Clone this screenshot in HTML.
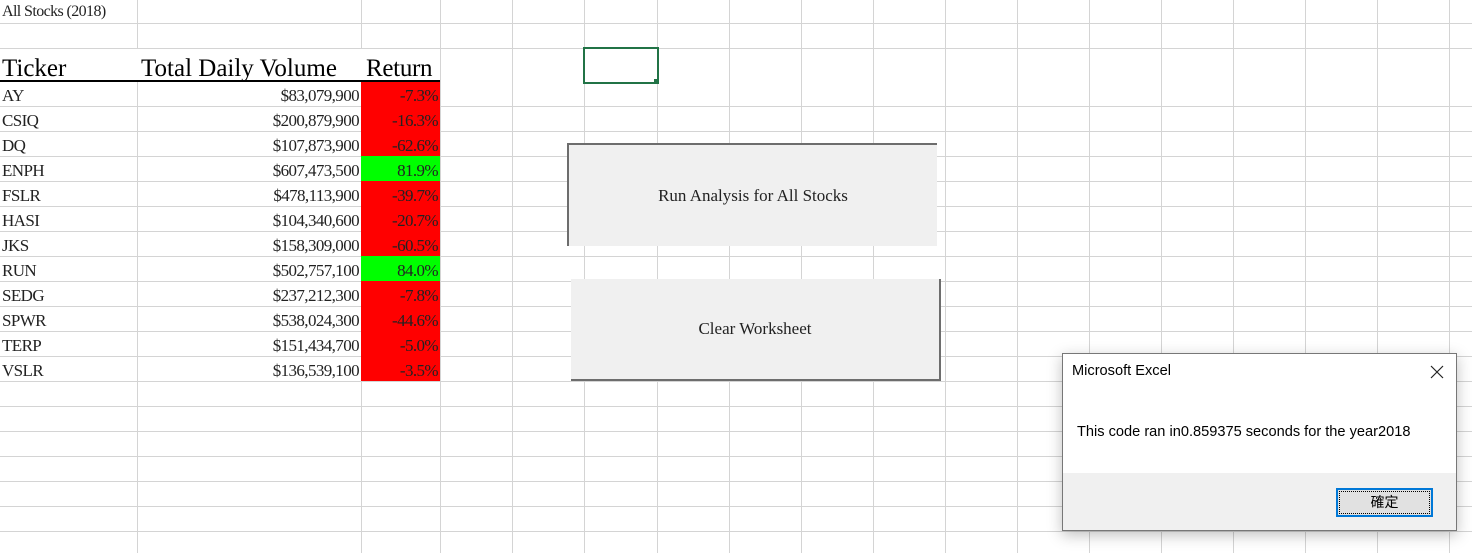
<!DOCTYPE html>
<html><head><meta charset="utf-8"><style>
body{margin:0;width:1472px;height:553px;overflow:hidden;background:#fff;position:relative;font-family:"Liberation Serif",serif;}
.v{position:absolute;top:0;width:1px;height:553px;background:#d4d4d4}
.h{position:absolute;left:0;height:1px;width:1472px;background:#d4d4d4}
.t{position:absolute;font-size:17px;color:#222;line-height:25px;white-space:nowrap;letter-spacing:-0.6px}
.r{position:absolute;text-align:right;font-size:17px;line-height:25px;color:#222;letter-spacing:-0.6px}
.c{position:absolute;left:361px;width:79px;height:25px;background:#f00}
.g{background:#0f0}
</style></head><body>
<div class="h" style="top:23px"></div><div class="h" style="top:48px"></div>
<div class="v" style="left:137px"></div><div class="v" style="left:361px"></div><div class="v" style="left:440px"></div>
<div class="v" style="left:512px"></div><div class="v" style="left:584px"></div><div class="v" style="left:657px"></div>
<div class="v" style="left:729px"></div><div class="v" style="left:801px"></div><div class="v" style="left:873px"></div>
<div class="v" style="left:945px"></div><div class="v" style="left:1017px"></div><div class="v" style="left:1089px"></div>
<div class="v" style="left:1161px"></div><div class="v" style="left:1233px"></div><div class="v" style="left:1305px"></div>
<div class="v" style="left:1377px"></div><div class="v" style="left:1449px"></div>
<div class="h" style="top:106px"></div><div class="h" style="top:131px"></div><div class="h" style="top:156px"></div>
<div class="h" style="top:181px"></div><div class="h" style="top:206px"></div><div class="h" style="top:231px"></div>
<div class="h" style="top:256px"></div><div class="h" style="top:281px"></div><div class="h" style="top:306px"></div>
<div class="h" style="top:331px"></div><div class="h" style="top:356px"></div><div class="h" style="top:381px"></div>
<div class="h" style="top:406px"></div><div class="h" style="top:431px"></div><div class="h" style="top:456px"></div>
<div class="h" style="top:481px"></div><div class="h" style="top:506px"></div><div class="h" style="top:531px"></div>
<div style="position:absolute;left:0;top:0;width:137px;height:23px;background:#fff"></div>
<div style="position:absolute;left:0;top:49px;width:440px;height:32px;background:#fff"></div>
<div style="position:absolute;left:0;top:80px;width:440px;height:2px;background:#000"></div>
<div class="t" style="left:2px;top:0;line-height:23px;font-size:16px">All Stocks (2018)</div>
<div class="t" style="left:2px;top:56px;font-size:25px;color:#000;letter-spacing:0">Ticker</div>
<div class="t" style="left:141px;top:56px;font-size:25px;color:#000;letter-spacing:0">Total Daily Volume</div>
<div class="t" style="left:366px;top:56px;font-size:25px;color:#000;letter-spacing:-0.3px">Return</div>
<div class="c" style="top:82px;height:74px"></div><div class="c g" style="top:156px"></div>
<div class="c" style="top:181px;height:75px"></div><div class="c g" style="top:256px"></div>
<div class="c" style="top:281px;height:100px"></div>
<div class="t" style="left:2px;top:83px">AY<br>CSIQ<br>DQ<br>ENPH<br>FSLR<br>HASI<br>JKS<br>RUN<br>SEDG<br>SPWR<br>TERP<br>VSLR</div>
<div class="r" style="left:137px;width:222px;top:83px">$83,079,900<br>$200,879,900<br>$107,873,900<br>$607,473,500<br>$478,113,900<br>$104,340,600<br>$158,309,000<br>$502,757,100<br>$237,212,300<br>$538,024,300<br>$151,434,700<br>$136,539,100</div>
<div class="r" style="left:361px;width:77px;top:83px">-7.3%<br>-16.3%<br>-62.6%<br>81.9%<br>-39.7%<br>-20.7%<br>-60.5%<br>84.0%<br>-7.8%<br>-44.6%<br>-5.0%<br>-3.5%</div>
<div style="position:absolute;left:583px;top:47px;width:72px;height:33px;border:2px solid #217346"></div>
<div style="position:absolute;left:654px;top:79px;width:5px;height:5px;background:#217346"></div>
<div style="position:absolute;left:567px;top:143px;width:368px;height:101px;background:#f0f0f0;border-left:2px solid #6d6d6d;border-top:2px solid #6d6d6d;font-size:17px;color:#222;display:flex;align-items:center;justify-content:center">Run Analysis for All Stocks</div>
<div style="position:absolute;left:571px;top:279px;width:368px;height:100px;background:#f0f0f0;border-right:2px solid #6d6d6d;border-bottom:2px solid #6d6d6d;font-size:17px;color:#222;display:flex;align-items:center;justify-content:center">Clear Worksheet</div>
<div style="position:absolute;left:1062px;top:353px;width:393px;height:176px;background:#fff;border:1px solid #777;box-shadow:0 4px 14px rgba(0,0,0,.25);font-family:'Liberation Sans',sans-serif">
<div style="position:absolute;left:9px;top:9px;font-size:14.6px;color:#000">Microsoft Excel</div>
<svg style="position:absolute;left:367px;top:11px" width="14" height="14"><path d="M1 1L13 13M13 1L1 13" stroke="#222" stroke-width="1.2"/></svg>
<div style="position:absolute;left:14px;top:70px;font-size:14.6px;color:#000">This code ran in0.859375 seconds for the year2018</div>
<div style="position:absolute;left:0;top:119px;width:393px;height:57px;background:#f0f0f0">
<div style="position:absolute;left:273px;top:15px;width:97px;height:29px;background:#e1e1e1;border:2px solid #0078d7;box-sizing:border-box;outline:1px dotted #000;outline-offset:-4px;font-family:'Liberation Sans','Noto Sans CJK TC',sans-serif;font-size:14px;text-align:center;line-height:25px">確定</div></div>
</div>
</body></html>
